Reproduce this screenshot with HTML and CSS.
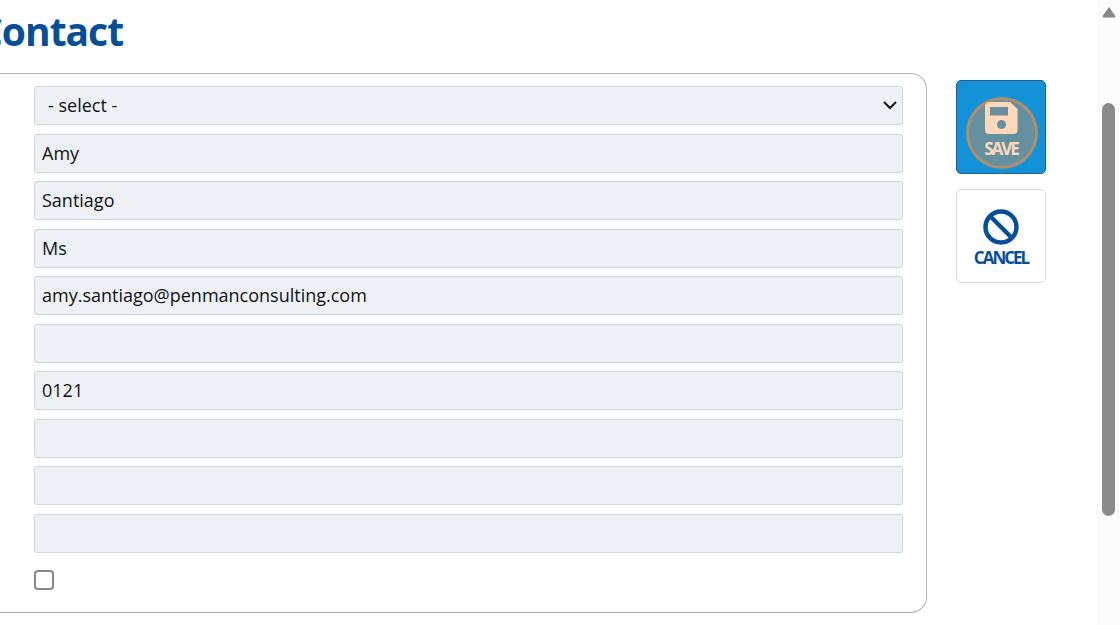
FILE: index.html
```html
<!DOCTYPE html>
<html lang="en">
<head>
  <meta charset="UTF-8" />
  <meta name="viewport" content="width=device-width, initial-scale=1.0" />
  <title>Contact</title>
  <link rel="stylesheet" href="styles.css">
</head>
<body>
  <main class="page">
    <h1 class="page-title">Contact</h1>

    <form class="contact-form">
      <!-- Contact fields -->
      <div class="panel">
        <div class="select-wrap">
          <select class="field" aria-label="Title">
            <option>- select -</option>
          </select>
          <svg class="chevron" viewBox="0 0 14 9" aria-hidden="true">
            <path d="M1 1L7 7L13 1" fill="none" stroke="#111" stroke-width="2"/>
          </svg>
        </div>
        <input class="field" type="text" aria-label="First name" value="Amy">
        <input class="field" type="text" aria-label="Last name" value="Santiago">
        <input class="field" type="text" aria-label="Salutation" value="Ms">
        <input class="field" type="email" aria-label="Email" value="amy.santiago@penmanconsulting.com">
        <input class="field" type="text" aria-label="Job title">
        <input class="field" type="tel" aria-label="Phone" value="0121">
        <input class="field" type="tel" aria-label="Mobile">
        <input class="field" type="text" aria-label="Department">
        <input class="field" type="text" aria-label="Notes">
        <input class="check" type="checkbox" aria-label="Main contact">
      </div>

      <!-- Form buttons -->
      <div class="actions">
        <button class="action-btn save-btn" type="button">
          <svg class="icon" viewBox="0 0 36 36" aria-hidden="true">
            <path fill="currentColor" fill-rule="evenodd" d="M6 2H27L34.500 9V30Q34.500 34 30.500 34H6Q2 34 2 30V6Q2 2 6 2ZM7 7V15.500H25V7ZM18.500 20A4.500 4.500 0 1 0 18.500 29A4.500 4.500 0 1 0 18.500 20Z"/>
          </svg>
          <span>SAVE</span>
          <span class="click-marker"></span>
        </button>
        <button class="action-btn" type="button">
          <svg class="icon" viewBox="0 0 36 36" aria-hidden="true">
            <circle cx="18" cy="18" r="15.500" fill="none" stroke="currentColor" stroke-width="4.500"/>
            <path d="M7.500 7.500L28.500 28.500" stroke="currentColor" stroke-width="4.500"/>
          </svg>
          <span>CANCEL</span>
        </button>
      </div>
    </form>
  </main>

  <!-- Scrollbar -->
  <div class="scrollbar" aria-hidden="true">
    <svg class="scroll-up" viewBox="0 0 14 11">
      <path d="M7 1.500L12.500 9.500H1.500Z" fill="#888" stroke="#888" stroke-width="2" stroke-linejoin="round"/>
    </svg>
    <div class="scroll-thumb"></div>
  </div>
</body>
</html>
```

FILE: styles.css
```css
* {
  box-sizing: border-box;
}
body {
  display: flex;
  margin: 0;
  min-height: 100vh;
  overflow: hidden;
  background: #fff;
  color: #111;
  font-family: "Open Sans", sans-serif;
}

/* Page */
.page {
  flex: 1;
  min-width: 0;
}
.page-title {
  margin: 0 0 0 -22px;
  padding: 4px 0 15px;
  color: #064f98;
  font-size: 39px;
  line-height: 54px;
  letter-spacing: -1px;
}
.contact-form {
  display: flex;
  align-items: flex-start;
  gap: 29px;
  padding-right: 51px;
}

/* Contact fields */
.panel {
  display: flex;
  flex: 1;
  flex-direction: column;
  padding: 12px 23px 22px 34px;
  border: 1px solid #a9b4bd;
  border-left: 0;
  border-radius: 0 16px 16px 0;
}
.field {
  width: 100%;
  height: 39px;
  margin: 0 0 8px;
  padding: 0 7px 1px;
  border: 1px solid #ccd6de;
  border-radius: 3px;
  background: #edf1f6;
  color: #111;
  font-family: inherit;
  font-size: 18px;
}
.field:nth-child(odd) {
  margin-bottom: 9px;
}
.select-wrap {
  position: relative;
}
select.field {
  display: block;
  padding: 0 24px 1px 13px;
  appearance: none;
}
.chevron {
  position: absolute;
  top: 15px;
  right: 6px;
  width: 14px;
  height: 9px;
  pointer-events: none;
}
.check {
  width: 20px;
  height: 20px;
  margin: 9px 0 0;
  border: 2px solid #868686;
  border-radius: 4px;
  background: #fff;
  appearance: none;
}
.check:checked {
  background: #064f98;
}

/* Buttons */
.actions {
  display: flex;
  flex-direction: column;
  gap: 15px;
  padding-top: 7px;
}
.action-btn {
  position: relative;
  display: flex;
  flex-direction: column;
  align-items: center;
  justify-content: center;
  gap: 2px;
  width: 90px;
  height: 94px;
  padding: 5px 0 0;
  border: 1px solid #d7dde3;
  border-radius: 5px;
  background: #fff;
  color: #064f98;
  font-family: inherit;
  font-size: 17px;
  font-weight: 700;
  line-height: 22px;
  letter-spacing: -2px;
  cursor: pointer;
}
.save-btn {
  border-color: #235d88;
  background: #1492d9;
  color: #fff;
}
.icon {
  width: 36px;
  height: 36px;
}
.click-marker {
  position: absolute;
  top: 16px;
  left: 9px;
  width: 72px;
  height: 72px;
  border: 3px solid rgba(255, 140, 50, 0.5);
  border-radius: 50%;
  background: rgba(255, 140, 50, 0.34);
}

/* Scrollbar */
.scrollbar {
  display: flex;
  flex-direction: column;
  align-items: center;
  width: 23px;
  height: 100vh;
  background: #fbfbfb;
}
.scroll-up {
  width: 14px;
  height: 11px;
  margin: 7px 0 85px;
}
.scroll-thumb {
  width: 13px;
  height: 66%;
  border-radius: 7px;
  background: #8b8b8b;
}
```
